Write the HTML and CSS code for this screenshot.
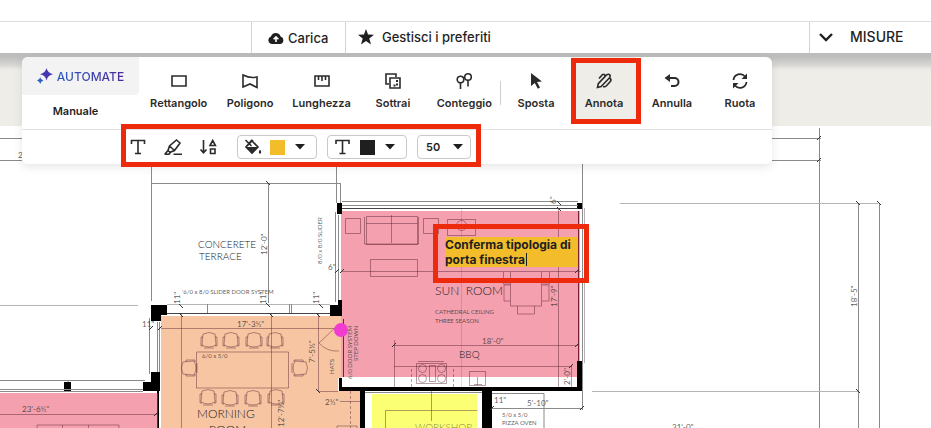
FILE: index.html
```html
<!DOCTYPE html>
<html lang="it">
  <head>
    <meta charset="UTF-8" />
    <meta name="viewport" content="width=device-width, initial-scale=1.0" />
    <title>Planimetria - Annota</title>
    <link rel="stylesheet" href="styles.css">
  </head>
  <body>
    <header class="topbar">
      <button class="topbar-item upload">
        <svg class="icon-16" viewBox="0 0 16 16">
          <path fill="#1f1f1f" d="M4.3 14A3.8 3.8 0 0 1 3 6.600A5 5 0 0 1 12.600 6.400A3.900 3.900 0 0 1 12 14z" />
          <path fill="none" stroke="#fff" stroke-width="1.600" d="M8 12V7M5.600 9.200L8 6.800l2.400 2.400" />
        </svg>
        Carica
      </button>
      <button class="topbar-item favourites">
        <svg class="icon-16" viewBox="0 0 16 16">
          <path fill="#1f1f1f" d="M8 0l2 5.600 6 .2-4.700 3.600L13 15.500 8 12l-5 3.500 1.700-6.100L0 5.800l6-.2z" />
        </svg>
        Gestisci i preferiti
      </button>
      <button class="topbar-item measures">
        <svg class="icon-14" viewBox="0 0 14 14">
          <path fill="none" stroke="#1f1f1f" stroke-width="2.400" d="M1 4l6 6 6-6" />
        </svg>
        MISURE
      </button>
    </header>

    <main class="viewer">
      <div class="sheet">
        <svg class="plan" width="100%" height="100%">
          <defs>
            <path id="tick" d="M-2 2L2-2" />
            <path id="tock" d="M-2-2L2 2" />
            <g id="chair">
              <path d="M-6-6q6-3 12 0l1 11q-7 4-14 0z" />
              <path d="M-6-3h-2v9h2M6-3h2v9h-2M-5 8h10" />
            </g>
          </defs>
          <g transform="translate(0 -126)">
            <!-- room fills -->
            <path class="pink" d="M0 393h158v100H0zM341 211h239v166H341z" />
            <path class="orange" d="M161 316h177v75h22v100H161z" />
            <path class="orange" d="M338 316h3v62h-3z" />
            <path class="yellow" d="M372 394h105v100H372z" />

            <!-- walls -->
            <path class="wall" d="M151 305h16v10h-6v6h-10zM151 372h9v19h-17v-9h8zM64 382h7v10h-7zM337 203h5v11h-5zM577 203h5v6h-5zM330 305h8v-5h4v16h-12zM339 378h3v9h235v-26h5v30h-90v100h-10V391H365v100h-5V391h-21z" />
            <path class="wall" d="M157 391h2v100h-2z" />

            <!-- dimension and outline lines -->
            <g class="line">
              <path d="M0 138.500h22M0 160.500h22M151.500 160v141M151 183.500h190M268.500 183v120M336.500 160v43M340.500 183v20" />
              <path d="M772 138.500h49M772 160.500h49M819.500 128v400M582.500 160v250" />
              <path class="soft" d="M0 305.500h138M620 203.500h258M592 391.500h267" />
              <path d="M858.500 203v300M879.500 203v300" />
              <path d="M0 380.500h145M0 389.500h143M0 391.500h143M68 380v2" />
              <path d="M149.500 318v56M157.500 322v50M159.500 322v50" />
              <path class="soft" d="M167 304.500h163" />
              <path d="M207.500 304v10M289.500 304v10M291.500 304v10" />
              <path d="M342 201.500h236M342 205.500h236M335.500 212v90M338.500 215v85" />
              <path class="soft" d="M584.500 208v155" />
              <path d="M492 393.500h52v40M492 408.500h90M365 392.500h117" />
              <path class="strong" d="M342 208.500h236M167 313.500h163" />
            </g>
            <g class="line dim">
              <path d="M161 328.500h178M181.500 314v200M271.500 314v200M318.500 314v78M196.500 352v36h92v-36z" />
              <path d="M0 414.500h158M37 430v-5h82v5M62.500 425v5M88.500 425v5" />
              <path d="M319 343q8 9 20 8M319 343l18-17M318 391.500h20M340 401.500h20M337 430v-4h20v4" />
              <path d="M341 271.500h240M558.500 209v178M394.500 340v48M394 345.500h184M394 366.500h178M571.500 366v21" />
              <path class="faint" d="M461.500 209v178" />
              <path d="M345.500 218.500h15v15h-15zM423.500 218.500h15v15h-15zM447.500 219.500h28v16h-28zM370.500 259.500h47v17h-47z" />
              <path d="M366.500 216.500h51v28h-51zM366.500 223.500h51M391.500 215v28M364.500 217v27h54v-27" />
              <circle cx="461.500" cy="225.500" r="5" />
              <path d="M510.500 272v34h31v-34M517.500 306v8h17v-8M503.500 272v12h7M549.500 272v12h-7M510 285h-6v16h6M542 285h7v16h-7" />
              <path d="M416.500 363.500h30v20h-30zM429.500 365.500h6v16h-6zM418 361.500h26" />
              <circle cx="422.500" cy="368.500" r="4" /><circle cx="441.500" cy="368.500" r="4" />
              <circle cx="422.500" cy="378.500" r="4" /><circle cx="441.500" cy="378.500" r="4" />
              <path d="M469.500 371.500h16v14h-16zM477.500 377v8M474 384.500h8" />
              <path class="dash" d="M411.500 369v18M453.500 369v18M350.500 391v40" />
              <path d="M385.500 430v-19.500h92M431.500 391v30" />
              <use href="#chair" x="209" y="340" /><use href="#chair" x="231" y="340" />
              <use href="#chair" x="254" y="340" /><use href="#chair" x="275" y="340" />
              <use href="#chair" x="208" y="397" /><use href="#chair" x="230" y="398" />
              <use href="#chair" x="253" y="398" /><use href="#chair" x="276" y="397" />
              <use href="#chair" transform="translate(189 368) rotate(-90)" />
              <use href="#chair" transform="translate(300 368) rotate(90)" />
            </g>
            <path class="edge" d="M578.500 211v150M343.500 319v58M157.500 393v100" />

            <!-- dimension ticks -->
            <g class="tick">
              <use href="#tick" x="819" y="138" /><use href="#tick" x="819" y="160" />
              <use href="#tock" x="858" y="203" /><use href="#tock" x="879" y="203" />
              <use href="#tock" x="858" y="391" /><use href="#tick" x="582" y="408" />
              <use href="#tock" x="268" y="183" /><use href="#tock" x="268" y="305" />
              <use href="#tock" x="181" y="306" /><use href="#tock" x="181" y="315" />
              <use href="#tock" x="271" y="315" /><use href="#tock" x="321" y="306" />
              <use href="#tock" x="318" y="315" /><use href="#tick" x="151" y="328" />
              <use href="#tick" x="160" y="328" /><use href="#tick" x="337" y="271" />
              <use href="#tick" x="342" y="271" /><use href="#tick" x="577" y="271" />
              <use href="#tock" x="559" y="203" /><use href="#tock" x="559" y="209" />
              <use href="#tick" x="394" y="345" /><use href="#tick" x="577" y="345" />
              <use href="#tick" x="571" y="366" /><use href="#tock" x="318" y="391" />
              <use href="#tick" x="156" y="414" /><use href="#tick" x="492" y="408" />
            </g>

            <g class="label">
              <text class="t10" x="198" y="248">CONCERETE</text>
              <text class="t10" x="199" y="260">TERRACE</text>
              <text class="t12" x="197" y="418">MORNING</text>
              <text class="t12" x="209" y="434">ROOM</text>
              <text class="t12" x="435" y="295">SUN&nbsp; ROOM</text>
              <text class="t10" x="459" y="358">BBQ</text>
              <text class="t10 olive" x="415" y="431">WORKSHOP</text>
            </g>
            <g class="label note">
              <text class="t6" x="182" y="294">'6/0 x 8/0 SLIDER DOOR SYSTEM</text>
              <text class="t6" x="202" y="358">6/0 x 5/0</text>
              <text class="t6" x="435" y="314">CATHEDRAL CEILING</text>
              <text class="t6" x="435" y="323">THREE SEASON</text>
              <text class="t6" x="502" y="417">5/0 x 5/0</text>
              <text class="t6" x="502" y="425">PIZZA OVEN</text>
              <text class="t8" x="237" y="327">17'-3½"</text>
              <text class="t8" x="22" y="412">23'-6½"</text>
              <text class="t8" x="482" y="344">18'-0"</text>
              <text class="t8" x="527" y="406">5'-10"</text>
              <text class="t8" x="494" y="403">11"</text>
              <text class="t8" x="142" y="327">11"</text>
              <text class="t8" x="328" y="270">6"</text>
              <text class="t8" x="325" y="405">2½"</text>
              <text class="t8" x="672" y="430">31'-0"</text>
              <text class="t8" x="18" y="158">2</text>
              <text class="t8" transform="translate(267 255) rotate(-90)">12'-0"</text>
              <text class="t8" transform="translate(857 307) rotate(-90)">18'-5"</text>
              <text class="t8" transform="translate(557 307) rotate(-90)">17'-9"</text>
              <text class="t8" transform="translate(570 385) rotate(-90)">2'-0"</text>
              <text class="t8" transform="translate(315 363) rotate(-90)">7'-5½"</text>
              <text class="t8" transform="translate(284 427) rotate(-90)">12'-7½"</text>
              <text class="t8" transform="translate(180 304) rotate(-90)">11"</text>
              <text class="t8" transform="translate(266 304) rotate(-90)">11"</text>
              <text class="t8" transform="translate(319 304) rotate(-90)">11"</text>
              <text class="t8" transform="translate(556 204) rotate(-90)">6"</text>
              <text class="t6" transform="translate(322 264) rotate(-90)">8/0 x 8/0 SLIDER</text>
              <text class="t6" transform="translate(334 374) rotate(-90)">HATS</text>
              <text class="t6" transform="translate(352 379) rotate(-90)">6/0 DOOR SYSTEM</text>
              <text class="t6" transform="translate(358 361) rotate(-90)">STEP DOWN</text>
            </g>
            <circle class="marker" cx="341" cy="330" r="7" />
          </g>
        </svg>
      </div>

      <div class="annotation">
        <textarea class="annotation-text" rows="2" spellcheck="false" aria-label="Testo annotazione">Conferma tipologia di
porta finestra</textarea>
        <span class="caret"></span>
      </div>

      <section class="toolbar">
        <div class="toolbar-main">
          <div class="modes">
            <button class="mode automate">
              <svg class="icon-16" viewBox="0 0 16 16">
                <path fill="#4338b0" d="M9.500 0q1 5 6.500 6.200-5.500 1.100-6.500 6.200-1-5.100-6.500-6.200Q8.500 5 9.500 0z" />
                <path fill="#2f62c4" d="M3.200 9.200q.6 2.700 3.300 3.300-2.700.6-3.300 3.400Q2.600 13.100 0 12.500q2.600-.6 3.200-3.300z" />
              </svg>
              <span class="automate-text">AUTOMATE</span>
            </button>
            <button class="mode manual">Manuale</button>
          </div>
          <div class="tools draw">
            <button class="tool">
              <svg class="icon-18" viewBox="0 0 18 18"><path d="M2 4h14v10H2z" /></svg>
              Rettangolo
            </button>
            <button class="tool">
              <svg class="icon-18" viewBox="0 0 18 18"><path d="M2 3q7 3.500 14 2v10.500L9 12l-7 3z" /></svg>
              Poligono
            </button>
            <button class="tool">
              <svg class="icon-18" viewBox="0 0 18 18"><path d="M2 4h14v10H2zM5.500 4v4M9 4v5M12.500 4v4" /></svg>
              Lunghezza
            </button>
            <button class="tool">
              <svg class="icon-18" viewBox="0 0 18 18"><path d="M5 12H2V2h10v3M6 6h10v10H6z" /><path stroke-width="2" stroke-dasharray="2 1.500" d="M13 8v5.500H8" /></svg>
              Sottrai
            </button>
            <button class="tool">
              <svg class="icon-18" viewBox="0 0 18 18"><circle cx="5.500" cy="7.500" r="3.300" /><circle cx="13" cy="5" r="3.300" /><path d="M5.500 11v6M13 8.500v6" /></svg>
              Conteggio
            </button>
          </div>
          <div class="tools edit">
            <button class="tool">
              <svg class="icon-18" viewBox="0 0 18 18"><path class="solid" d="M4 1l11 8.500-5 .5 3 5.600-2.200 1.200-3-5.800L4 14z" /></svg>
              Sposta
            </button>
            <button class="tool active">
              <svg class="icon-18" viewBox="0 0 18 18"><path d="M2.500 15.500l.8-3.800 8-8.500q2-1.700 3.300-.5t-.3 3.300l-8.200 8.500zM4 6.500l3.500-4 2 0 .8 2M8 14.500q2 .8 3.500-.7l4-4.500q1.200-2-.8-3.500" /></svg>
              Annota
            </button>
            <button class="tool">
              <svg class="icon-18" viewBox="0 0 18 18"><path stroke-width="2" d="M4 6h7.500a4 4 0 0 1 0 8H8" /><path class="solid" d="M1.500 6L7 2v8z" /></svg>
              Annulla
            </button>
            <button class="tool">
              <svg class="icon-18" viewBox="0 0 18 18"><path stroke-width="1.800" d="M2.500 8A6.500 6.500 0 0 1 14 4.500M15.500 10A6.500 6.500 0 0 1 4 13.500" /><path class="solid" d="M16 1.500V7h-5.500zM2 16.500V11h5.500z" /></svg>
              Ruota
            </button>
          </div>
        </div>

        <div class="toolbar-options">
          <button class="option" aria-label="Testo">
            <svg class="icon-18" viewBox="0 0 18 18"><path d="M2.500 6V2.500h13V6M9 2.500v13M6 15.500h6" /></svg>
          </button>
          <button class="option" aria-label="Evidenziatore">
            <svg class="icon-18" viewBox="0 0 18 18"><path d="M.5 16.300h4.500l1.500-2M9.500 16.300H18M4 12.500L5.500 8 12.500 2 16 5l-5.500 7.500-4.500 1.800zM5.500 8l5 4.500M4 12.500L.8 16.300" /></svg>
          </button>
          <button class="option" aria-label="Ordina">
            <svg class="icon-18" viewBox="0 0 18 18"><path d="M4.500 2v13M1.500 11.500l3 3.300 3-3.300M11 7.500l2.700-5 2.700 5zM11.500 11h4.500v4.500h-4.500z" /></svg>
          </button>
          <button class="picker" aria-label="Colore di riempimento">
            <svg class="icon-18" viewBox="0 0 18 18"><path d="M1.500 2l6 6M7.500 2.500l6.500 6.500-6 6-6-6zM9 2L3 8" /><path class="solid" d="M2 9h12l-6 6.500zM16 11.500q2.400 3.500 0 4.300-2.400-.8 0-4.300z" /></svg>
            <span class="swatch yellow-swatch"></span>
            <svg class="arrow" viewBox="0 0 10 6"><path d="M0 0h10L5 5.500z" /></svg>
          </button>
          <button class="picker" aria-label="Colore del testo">
            <svg class="icon-18" viewBox="0 0 18 18"><path d="M2 6V2.500h13V6M8.500 2.500v13M5.500 15.500h6" /></svg>
            <span class="swatch black-swatch"></span>
            <svg class="arrow" viewBox="0 0 10 6"><path d="M0 0h10L5 5.500z" /></svg>
          </button>
          <div class="size">
            <select aria-label="Dimensione">
              <option>50</option>
            </select>
            <svg class="arrow" viewBox="0 0 10 6"><path d="M0 0h10L5 5.500z" /></svg>
          </div>
        </div>
      </section>
    </main>
  </body>
</html>
```
FILE: styles.css
```css
*,
*::before,
*::after {
  box-sizing: border-box;
}
body {
  margin: 0;
  padding-top: 21px;
  min-height: 100vh;
  display: flex;
  flex-direction: column;
  font-family: "Inter", sans-serif;
  color: #1f1f1f;
  background: white;
  overflow: hidden;
}
button,
select,
textarea {
  font: inherit;
  color: inherit;
  border: 0;
  padding: 0;
  background: none;
}
button {
  cursor: pointer;
}
svg {
  flex: none;
}
.icon-14 {
  width: 14px;
  height: 14px;
}
.icon-16 {
  width: 16px;
  height: 16px;
}
.icon-18 {
  width: 18px;
  height: 18px;
  fill: none;
  stroke: #2b2b2b;
  stroke-width: 1.6;
}
.icon-18 .solid {
  fill: #2b2b2b;
  stroke: none;
}

/* Top bar */
.topbar {
  display: flex;
  justify-content: flex-end;
  height: 32px;
  border-top: 1px solid #dedede;
}
.topbar-item {
  display: flex;
  align-items: center;
  border-left: 1px solid #d4d4d4;
  font-size: 13px;
  font-weight: 500;
}
.upload {
  width: 94px;
  gap: 4px;
  padding-left: 16px;
}
.favourites {
  flex: 0 1 464px;
  gap: 8px;
  padding-left: 12px;
  padding-bottom: 2px;
}
.measures {
  width: 122px;
  gap: 17px;
  padding-left: 9px;
  padding-bottom: 2px;
  font-size: 14px;
}

/* Viewer */
.viewer {
  position: relative;
  flex: 1;
  display: flex;
  flex-direction: column;
  padding-top: 73px;
  background: linear-gradient(#bcbcbc, #bebebe 4px, #d8d7d4 12px, #eeede8 17px);
}
.sheet {
  position: relative;
  flex: 1;
  min-height: 302px;
  background: white;
  overflow: hidden;
}
.plan {
  position: absolute;
  inset: 0;
}
.pink {
  fill: #f5a0ae;
}
.orange {
  fill: #f8c5a3;
}
.yellow {
  fill: #faff74;
}
.wall {
  fill: black;
}
.line {
  fill: none;
  stroke: #8a8a8a;
  stroke-width: 1;
}
.line .soft {
  stroke: #b4b4b4;
}
.line .strong {
  stroke: #444;
}
.dim {
  stroke: #401020;
  stroke-opacity: 0.4;
}
.faint {
  stroke-opacity: 0.15;
}
.dash {
  stroke-dasharray: 3 2;
}
.edge {
  fill: none;
  stroke: #7a2036;
  stroke-width: 1;
}
.tick {
  stroke: #333;
  stroke-width: 1;
}
.label {
  font-family: "Lato", sans-serif;
  font-weight: 300;
  fill: #222;
}
.note {
  font-weight: 400;
  fill: #333;
  fill-opacity: 0.8;
}
.olive {
  fill: #8a8a3c;
}
.t6 {
  font-size: 6px;
}
.t8 {
  font-size: 8px;
}
.t10 {
  font-size: 10px;
}
.t12 {
  font-size: 12px;
}
.marker {
  fill: #f03ccf;
}

/* Text annotation placed on the plan */
.annotation {
  position: absolute;
  left: 433px;
  top: 171px;
  width: 156px;
  height: 59px;
  padding: 8px 7px;
  border: 5px solid #ee2a0c;
}
.annotation-text {
  display: block;
  width: 132px;
  height: 30px;
  resize: none;
  overflow: hidden;
  outline: none;
  background: #f2bc2a;
  font-size: 12px;
  font-weight: 700;
  line-height: 15px;
  white-space: pre;
}
.caret {
  position: absolute;
  left: 88px;
  top: 24px;
  width: 1px;
  height: 13px;
  background: #1f1f1f;
}

/* Toolbar */
.toolbar {
  position: absolute;
  top: 4px;
  left: 22px;
  right: 159px;
  border-radius: 6px;
  background: white;
  box-shadow: 0 3px 10px rgba(0, 0, 0, 0.1);
}
.toolbar-main {
  display: flex;
  height: 73px;
  border-bottom: 1px solid #e2e2e2;
}
.modes {
  display: flex;
  flex-direction: column;
  width: 117px;
}
.mode {
  display: flex;
  align-items: center;
  justify-content: center;
  font-size: 12px;
  font-weight: 500;
}
.automate {
  height: 38px;
  gap: 4px;
  border-radius: 6px 0 4px 0;
  background: #f3f3f4;
}
.automate-text {
  background: linear-gradient(90deg, #2f5cc0, #4b2a9c);
  background-clip: text;
  color: transparent;
}
.manual {
  flex: 1;
  padding-right: 10px;
  padding-bottom: 3px;
  font-size: 11px;
  font-weight: 600;
}
.tools {
  display: flex;
}
.draw {
  flex: 1;
  margin-left: 4px;
}
.draw .tool {
  flex: 1 1 0;
}
.edit {
  position: relative;
  gap: 4px;
  padding-left: 4px;
}
.edit::before {
  content: "";
  position: absolute;
  left: 0;
  top: 24px;
  width: 1px;
  height: 24px;
  background: #cfcfcf;
}
.edit .tool {
  width: 64px;
}
.tool {
  position: relative;
  display: flex;
  flex-direction: column;
  align-items: center;
  gap: 5px;
  padding-top: 15px;
  font-size: 11px;
  font-weight: 600;
  line-height: 16px;
  color: #2b2b2b;
}
.active {
  height: 64px;
  background: #eeede8;
}
.active::after {
  content: "";
  position: absolute;
  inset: 1px -5px -3px -1px;
  border: 5px solid #ee2a0c;
}
.toolbar-options {
  position: relative;
  display: flex;
  align-items: center;
  height: 34px;
  padding-left: 107px;
}
.toolbar-options::after {
  content: "";
  position: absolute;
  left: 99px;
  top: -6px;
  width: 360px;
  height: 43px;
  border: 5px solid #ee2a0c;
  pointer-events: none;
}
.option {
  width: 18px;
  height: 18px;
  margin-right: 17px;
}
.option:nth-of-type(3) {
  margin-right: 20px;
}
.picker {
  display: flex;
  align-items: center;
  width: 80px;
  height: 24px;
  margin-right: 10px;
  padding-left: 6px;
  gap: 8px;
  border: 1px solid #c9c9c9;
  border-radius: 4px;
}
.swatch {
  width: 15px;
  height: 15px;
}
.yellow-swatch {
  background: #f2bc2a;
}
.black-swatch {
  background: #1f1f1f;
}
.arrow {
  width: 10px;
  height: 6px;
  fill: #1f1f1f;
}
.picker .arrow {
  margin-left: 2px;
}
.size {
  position: relative;
  display: flex;
  align-items: center;
  width: 54px;
  height: 24px;
}
.size select {
  width: 100%;
  height: 100%;
  padding-left: 8px;
  border: 1px solid #c9c9c9;
  border-radius: 4px;
  appearance: none;
  font-size: 11px;
  font-weight: 600;
}
.size .arrow {
  position: absolute;
  right: 8px;
  pointer-events: none;
}
```
